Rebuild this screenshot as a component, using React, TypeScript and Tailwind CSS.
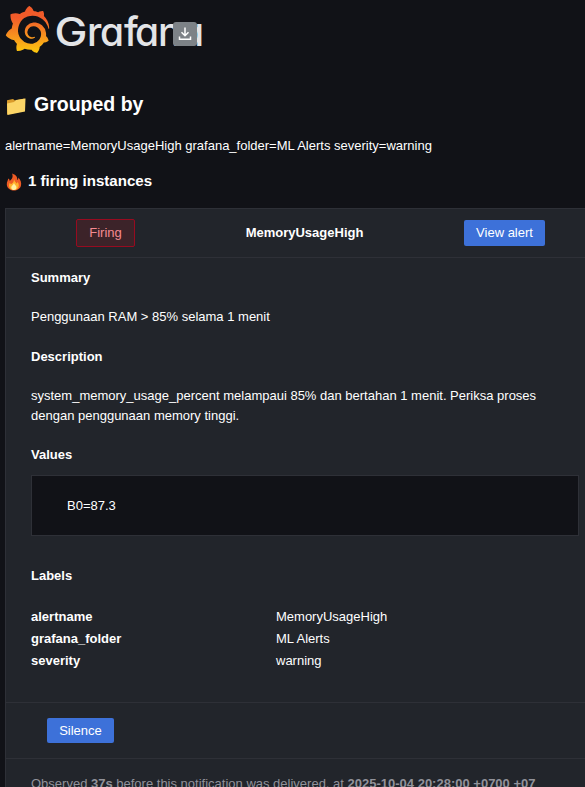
import type { ReactNode } from "react";
import { SiGrafana } from "react-icons/si";

function Logo() {
  return (
    <div className="relative ml-[5px] flex h-[60px] w-[205px]">
      <svg className="absolute size-0" aria-hidden="true">
        <defs>
          <linearGradient id="flame" x1="0" y1="1" x2="0" y2="0">
            <stop offset="0" stopColor="#fcc90d" />
            <stop offset="0.3" stopColor="#f99b1c" />
            <stop offset="0.75" stopColor="#f15b2a" />
            <stop offset="1" stopColor="#f05a28" />
          </linearGradient>
        </defs>
      </svg>
      <SiGrafana className="-ml-px mt-[6px] size-[47px] shrink-0" fill="url(#flame)" />
      <svg width="154" height="60" viewBox="0 0 154 60" className="shrink-0">
        <g fill="#e3e4e7" className="text-[39px] font-medium [font-family:Inter,sans-serif] [font-feature-settings:'cv11'_1]">
          <text x="3.500" y="45.500" textLength="33" lengthAdjust="spacingAndGlyphs">G</text>
          <text x="36 49 73 84 107 129" y="45.500">rafana</text>
        </g>
      </svg>
      <button aria-label="Download" className="absolute left-[168px] top-[22px] flex size-6 items-center justify-center rounded-[3px] bg-[#7d8287]">
        <svg width="14" height="14" viewBox="0 0 14 14" fill="none" stroke="#fff" strokeWidth="1.5">
          <path d="M7 .5v8M3.5 5.2 7 8.700l3.500-3.500M1.500 9.500v2.800h11V9.500" />
        </svg>
      </button>
    </div>
  );
}

function Folder() {
  return (
    <svg width="20" height="20" viewBox="0 0 20 20" className="shrink-0">
      <path d="M1 4.200 7 3l2 1.500 9.500-2V15L1 18.500Z" fill="#d99b2b" />
      <path d="M1 7.500 8 6l2-2 9.500-1.500-.5 13L1.500 19Z" fill="#fbd567" />
    </svg>
  );
}

function Fire() {
  return (
    <svg width="16" height="18" viewBox="0 0 16 18" className="shrink-0">
      <path d="M6 .5C11 2 11.500 5 11.200 7c1-.5 1.200-1.500 1-2.500C15 7 15.500 10 15 12.500 14.300 16 11 17.500 8 17.500S1 15.500.8 11.500C.7 8.500 2 7.500 2.300 5.500c1 .5 1.400 1.500 1.400 2.500C6 6 7.500 4 6 .5Z" fill="#ee5b25" />
      <path d="M8 6c.5 2.500 2 3 2.500 4.500.7-.2 1-1 1-1.700C14 12 13 17 8 17S2 12 4 9.500c.2 1 .7 1.500 1.300 1.500C7.300 10 8 8 8 6Z" fill="#ffb12b" />
      <path d="M8 10c.3 2 2.700 2.500 2.500 4.600C10.300 16.500 9 17 8 17s-3-.8-2.700-2.800C5.500 12.500 7.500 12 8 10Z" fill="#fff0a3" />
    </svg>
  );
}

function Label({ children }: { children: ReactNode }) {
  return <h3 className="font-bold leading-5">{children}</h3>;
}

const labels = [
  ["alertname", "MemoryUsageHigh"],
  ["grafana_folder", "ML Alerts"],
  ["severity", "warning"],
];

export default function App() {
  return (
    <main className="h-[787px] w-[585px] overflow-hidden bg-[#111217] font-['Liberation_Sans',Arial,sans-serif] text-[13px] leading-5 text-white">
      <Logo />
      <h1 className="ml-[6px] mt-[32px] flex h-6 items-center gap-2 text-[19.5px] font-bold">
        <span className="mt-[3px]"><Folder /></span>Grouped by
      </h1>
      <p className="ml-[5px] mt-[20px]">alertname=MemoryUsageHigh grafana_folder=ML Alerts severity=warning</p>
      <h2 className="ml-[6px] mt-[15px] flex h-5 items-center gap-[6px] text-[15.1px] font-bold">
        <span className="mt-px"><Fire /></span>1 firing instances
      </h2>

      <section className="ml-[5px] mt-[17px] h-[590px] border-l border-t border-[#2e3037] bg-[#22252b]">
        <header className="flex h-[49px] items-center border-b border-[#2e3037]">
          <div className="flex w-[199px] justify-center">
            <span className="flex h-7 w-[59px] items-center justify-center rounded-[2px] border border-[#970b20] bg-[#3c2329] text-[#f58a91]">Firing</span>
          </div>
          <strong className="w-[199px] text-center">MemoryUsageHigh</strong>
          <a className="ml-[60px] flex h-[26px] w-[81px] items-center justify-center rounded-[2px] bg-[#3d71d9]">View alert</a>
        </header>

        <div className="h-[445px] border-b border-[#2e3037] pl-[25px] pr-[6px] pt-[10px]">
          <Label>Summary</Label>
          <p className="mt-[19px]">Penggunaan RAM &gt; 85% selama 1 menit</p>
          <div className="mt-5"><Label>Description</Label></div>
          <p className="mt-[19px] w-[530px]">
            system_memory_usage_percent melampaui 85% dan bertahan 1 menit. Periksa proses<br />dengan penggunaan memory tinggi.
          </p>
          <div className="mt-[19px]"><Label>Values</Label></div>
          <div className="mt-[10px] flex h-[61px] items-center border border-[#2e3037] bg-[#111217] pl-[35px]">B0=87.3</div>
          <div className="mt-[30px]"><Label>Labels</Label></div>
          <dl className="mt-5 grid grid-cols-[245px_1fr] leading-[22px]">
            {labels.map(([name, value]) => (
              <div key={name} className="contents">
                <dt className="font-bold">{name}</dt>
                <dd>{value}</dd>
              </div>
            ))}
          </dl>
        </div>

        <div className="flex h-14 items-center border-b border-[#2e3037] pl-[41px]">
          <a className="flex h-[25px] w-[67px] items-center justify-center rounded-[2px] bg-[#3d71d9]">Silence</a>
        </div>
        <p className="ml-[25px] mt-[15px] whitespace-pre text-[#91929a]">
          Observed <b>37s</b> before this notification was delivered, at <b>2025-10-04 20:28:00 +0700 +07</b>
        </p>
      </section>
    </main>
  );
}
